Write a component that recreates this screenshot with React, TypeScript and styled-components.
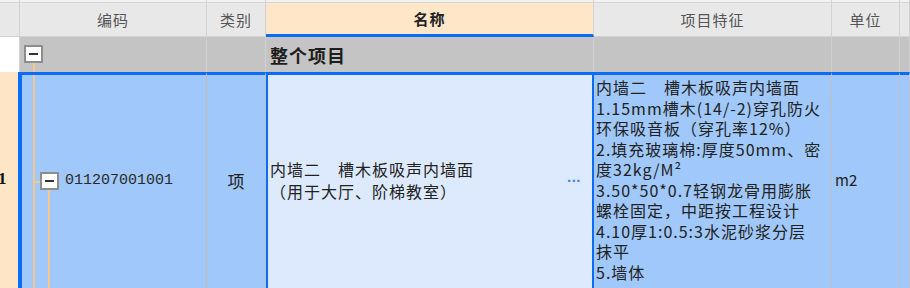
import React from "react";
import styled, { createGlobalStyle } from "styled-components";

const GlobalStyle = createGlobalStyle`
  html, body {
    margin: 0;
    padding: 0;
    background: #ffffff;
    overflow: hidden;
  }
  body {
    font-family: "Noto Sans CJK SC", "Noto Sans", sans-serif;
  }
`;

const BLUE = "#0b6cf6";
const TAN = "#f1c98f";

const features = [
  "内墙二　槽木板吸声内墙面",
  "1.15mm槽木(14/-2)穿孔防火",
  "环保吸音板（穿孔率12%）",
  "2.填充玻璃棉:厚度50mm、密",
  "度32kg/M²",
  "3.50*50*0.7轻钢龙骨用膨胀",
  "螺栓固定，中距按工程设计",
  "4.10厚1:0.5:3水泥砂浆分层",
  "抹平",
  "5.墙体",
];

const App = () => {
  return (
    <>
      <GlobalStyle />
      <Table>
        {/* header */}
        <HeadCell />
        <HeadCell>编码</HeadCell>
        <HeadCell>类别</HeadCell>
        <HeadCell $active>名称</HeadCell>
        <HeadCell>项目特征</HeadCell>
        <HeadCell>单位</HeadCell>
        <HeadCell />

        {/* group row */}
        <GroupNum />
        <GroupCell>
          <ToggleBox $top={8} $left={4} />
          <TreeLine $left={13} $top={26} $height={12} />
        </GroupCell>
        <GroupCell />
        <GroupTitle>整个项目</GroupTitle>
        <GroupCell />
        <GroupCell />
        <GroupCell />

        {/* data row */}
        <RowNum>1</RowNum>
        <CodeCell>
          <TreeLine $left={11} $top={0} $height={218} />
          <TreeHLine $left={12} $top={106} />
          <ToggleBox $top={97} $left={18} />
          <TreeLine $left={26} $top={115} $height={120} />
          <CodeText>011207001001</CodeText>
        </CodeCell>
        <TypeCell>项</TypeCell>
        <NameCell>
          <NameText>
            <div>内墙二　槽木板吸声内墙面</div>
            <div>（用于大厅、阶梯教室）</div>
          </NameText>
          <Ellipsis>...</Ellipsis>
        </NameCell>
        <FeatureCell>
          {features.map((line, i) => (
            <FeatureLine key={i}>{line}</FeatureLine>
          ))}
        </FeatureCell>
        <UnitCell>m2</UnitCell>
        <DataCell />
      </Table>
    </>
  );
};

export default App;

const Table = styled.div`
  display: grid;
  grid-template-columns: 20px 187px 59px 328px 238px 68px 1fr;
  grid-template-rows: 37px 35px 218px;
  width: 910px;
  height: 288px;
  overflow: hidden;
`;

const HeadCell = styled.div<{ $active?: boolean }>`
  box-sizing: border-box;
  display: flex;
  align-items: center;
  justify-content: center;
  padding-top: 3px;
  background: ${(p) =>
    p.$active
      ? `linear-gradient(#f2f2f2 0 2px, #d4d4d4 2px 3px, #fee6c9 3px)`
      : `linear-gradient(#f2f2f2 0 2px, #d4d4d4 2px 3px, #e8e8e8 3px)`};
  border-right: 1px solid #d3d3d3;
  border-bottom: ${(p) => (p.$active ? `3px solid ${BLUE}` : `1px solid #d3d3d3`)};
  font-size: 15px;
  letter-spacing: 1px;
  color: ${(p) => (p.$active ? "#222" : "#555")};
  font-weight: ${(p) => (p.$active ? 700 : 400)};
`;

const GroupNum = styled.div`
  background: #ffffff;
  border-right: 1px solid #d3d3d3;
`;

const GroupCell = styled.div`
  position: relative;
  box-sizing: border-box;
  background: #c4c4c4;
  border-right: 1px solid #d0d0d0;
`;

const GroupTitle = styled(GroupCell)`
  display: flex;
  align-items: center;
  padding-left: 4px;
  font-size: 18px;
  font-weight: 700;
  letter-spacing: 1px;
  color: #1e1e1e;
`;

const ToggleBox = styled.div<{ $top: number; $left: number }>`
  position: absolute;
  top: ${(p) => p.$top}px;
  left: ${(p) => p.$left}px;
  width: 19px;
  height: 18px;
  box-sizing: border-box;
  background: #ffffff;
  border: 2px solid #8d8d8d;
  z-index: 2;
  &::after {
    content: "";
    position: absolute;
    left: 3px;
    right: 3px;
    top: 6px;
    height: 2px;
    background: #333;
  }
`;

const TreeLine = styled.div<{ $left: number; $top: number; $height: number }>`
  position: absolute;
  left: ${(p) => p.$left}px;
  top: ${(p) => p.$top}px;
  width: 2px;
  height: ${(p) => p.$height}px;
  background: ${TAN};
`;

const TreeHLine = styled.div<{ $left: number; $top: number }>`
  position: absolute;
  left: ${(p) => p.$left}px;
  top: ${(p) => p.$top}px;
  width: 7px;
  height: 2px;
  background: ${TAN};
`;

const RowNum = styled.div`
  box-sizing: border-box;
  background: #fde5c6;
  border-right: 2px solid ${BLUE};
  display: flex;
  align-items: center;
  justify-content: flex-start;
  font-family: "Liberation Serif", serif;
  font-weight: 700;
  font-size: 17px;
  color: #111;
  text-indent: -2px;
  padding-bottom: 4px;
`;

const DataCell = styled.div`
  position: relative;
  box-sizing: border-box;
  background: #a0c8fb;
  border-top: 3px solid ${BLUE};
  border-right: 1px solid #b9c4d2;
  font-size: 16px;
  color: #222;
`;

const CodeCell = styled(DataCell)`
  border-left: 2px solid ${BLUE};
  border-right: 1px solid #c5bcae;
  display: flex;
  align-items: center;
  padding-left: 43px;
  padding-bottom: 4px;
`;

const CodeText = styled.span`
  font-family: "Liberation Mono", monospace;
  font-size: 15px;
  color: #2a2a2a;
`;

const TypeCell = styled(DataCell)`
  display: flex;
  align-items: center;
  justify-content: center;
  padding-bottom: 4px;
  font-size: 17px;
`;

const NameCell = styled(DataCell)`
  background: #dde9fd;
  border: 2px solid ${BLUE};
  border-top: 3px solid ${BLUE};
  display: flex;
  align-items: center;
  justify-content: space-between;
  padding: 0 11px 4px 2px;
`;

const NameText = styled.div`
  font-size: 16px;
  letter-spacing: 1px;
  line-height: 22px;
  white-space: nowrap;
  color: #222;
`;

const Ellipsis = styled.span`
  font-family: "Liberation Sans", sans-serif;
  color: #3a86e6;
  font-size: 15px;
  font-weight: 700;
  letter-spacing: 0.5px;
  margin-top: -6px;
`;

const FeatureCell = styled(DataCell)`
  padding: 2px 0 0 2px;
  border-right: 1px solid #c0c0c0;
`;

const FeatureLine = styled.div`
  font-size: 16px;
  letter-spacing: 1px;
  line-height: 20.5px;
  white-space: nowrap;
  color: #222;
`;

const UnitCell = styled(DataCell)`
  display: flex;
  align-items: center;
  padding-left: 3px;
  padding-bottom: 6px;
  font-size: 15px;
  border-right: 1px solid #c0c0c0;
`;
